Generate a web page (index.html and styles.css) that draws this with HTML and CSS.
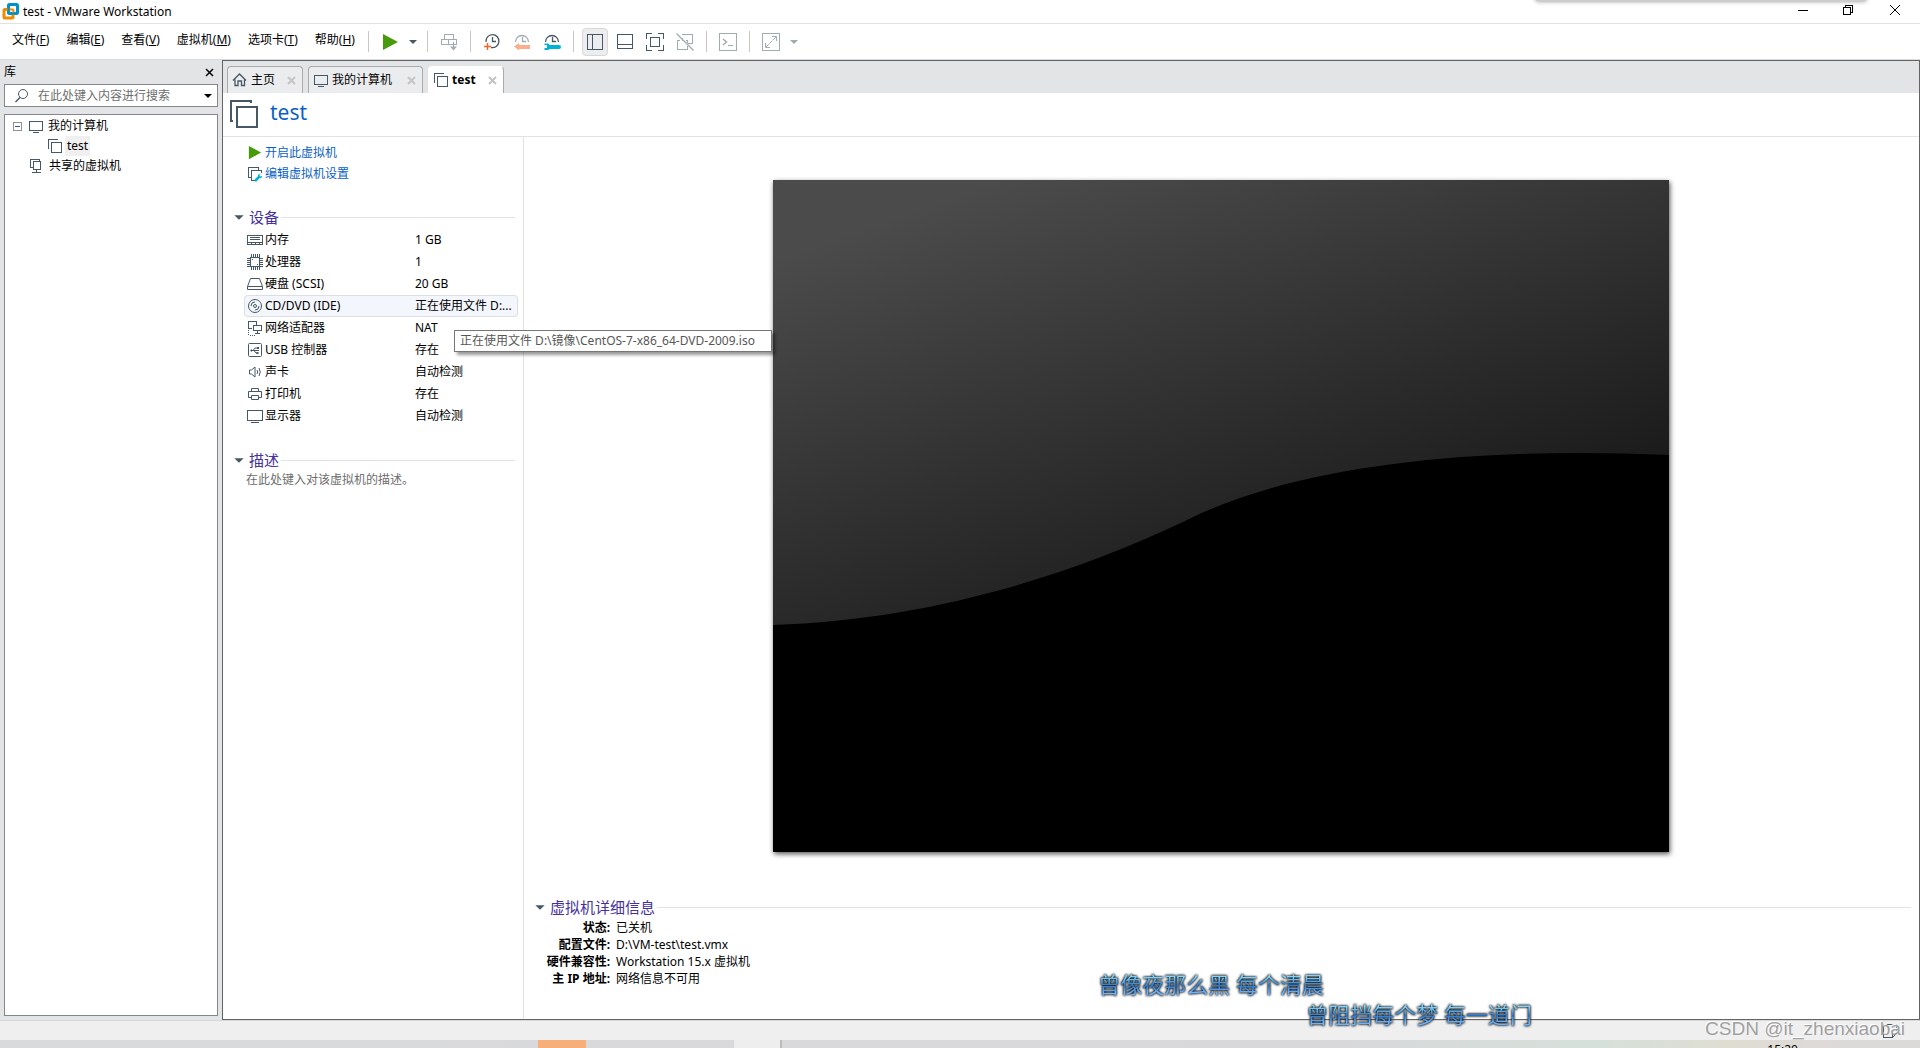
FILE: index.html
```html
<!DOCTYPE html>
<html lang="zh-CN">
<head>
    <meta charset="UTF-8">
    <title>test - VMware Workstation</title>
    <link rel="stylesheet" href="styles.css">
</head>
<body>
<!-- shared icons -->
<svg class="sprite">
    <symbol id="logo" viewBox="0 0 18 18"><g fill="none" stroke-width="3"><rect x="6.500" y="1.500" width="9" height="9" rx="1" stroke="#0091c8"/><path d="M6 6.500H3a1 1 0 0 0-1 1V14a1 1 0 0 0 1 1h7a1 1 0 0 0 1-1v-2" stroke="#f08a00"/><path d="M5 6.500h5.500a1 1 0 0 1 1 1V12" stroke="#f08a00" stroke-width="2"/><path d="M6.500 4v5.500a1 1 0 0 0 1 1H13" stroke="#0091c8" stroke-width="2"/></g></symbol>
    <symbol id="vm" viewBox="0 0 16 16"><path d="M1.500 10.500v-9h9M4.500 4.500h10v10h-10z" shape-rendering="crispEdges"/></symbol>
    <symbol id="vm-big" viewBox="0 0 28 28"><path d="M3 21H1V1h20v2M7 7h20v20H7z" stroke-width="2"/></symbol>
    <symbol id="monitor" viewBox="0 0 16 16"><path d="M1.500 3.500h13v9h-13zM5 14.500h6" shape-rendering="crispEdges"/></symbol>
    <symbol id="shared" viewBox="0 0 16 16"><path d="M3.500 9.500h-2v-8h9v2M4.500 3.500h7v8h-7zM7.500 12v2M3 14.500h9" shape-rendering="crispEdges"/></symbol>
    <symbol id="home" viewBox="0 0 16 16"><path d="M1 8.500 7.500 2 14 8.500M3 7.500v6h3V9h3.500v4.500h3v-6" stroke-width="1.300"/></symbol>
    <symbol id="play" viewBox="0 0 16 16"><path d="M1 0v15l14-7.500z" fill="#489a0d" stroke="none"/></symbol>
    <symbol id="down" viewBox="0 0 10 6"><path d="M1 1h8L5 5z" fill="currentColor" stroke="none"/></symbol>
    <symbol id="search" viewBox="0 0 16 16"><circle cx="9" cy="6" r="4.500"/><path d="M6 9.500 1.500 14" stroke-width="1.500"/></symbol>
    <symbol id="close" viewBox="0 0 9 9"><path d="M1 1l7 7M8 1 1 8"/></symbol>
</svg>

<header class="titlebar">
    <svg class="logo"><use href="#logo"/></svg>
    <h1>test - VMware Workstation</h1>
    <div class="winbtns">
        <button aria-label="最小化"><svg viewBox="0 0 10 10"><path d="M0 5.500h10" shape-rendering="crispEdges"/></svg></button>
        <button aria-label="还原"><svg viewBox="0 0 10 10"><path d="M.5 2.500h7v7h-7zM2.500 2V.5h7v7H8" shape-rendering="crispEdges"/></svg></button>
        <button aria-label="关闭"><svg viewBox="0 0 10 10"><path d="M0 0l10 10M10 0 0 10"/></svg></button>
    </div>
</header>

<div class="menubar">
    <nav class="menus">
        <button>文件(<u>F</u>)</button>
        <button>编辑(<u>E</u>)</button>
        <button>查看(<u>V</u>)</button>
        <button>虚拟机(<u>M</u>)</button>
        <button>选项卡(<u>T</u>)</button>
        <button>帮助(<u>H</u>)</button>
    </nav>
    <div class="tools">
        <i class="sep"></i>
        <button class="tool" aria-label="开启此虚拟机"><svg viewBox="0 0 18 18"><path d="M2 1v16l15-8z" fill="#489a0d" stroke="none"/></svg></button>
        <button class="caret" aria-label="电源选项"><svg><use href="#down"/></svg></button>
        <i class="sep"></i>
        <button class="tool off" aria-label="发送 Ctrl+Alt+Del"><svg viewBox="0 0 18 18"><path d="M4.500 1.500h9v5h-9zM1.500 6.500h7v5h-7zM8.500 6.500h8v5h-8zM13.500 9v6" shape-rendering="crispEdges"/><path d="M10 13.500h7l-3.500 4z" fill="currentColor" stroke="none"/></svg></button>
        <i class="sep"></i>
        <button class="tool" aria-label="拍摄快照"><svg viewBox="0 0 18 18"><path d="M3 9a6.500 6.500 0 1 1 5 5.500M9.500 4v4.500H13" stroke-width="1.300"/><path d="M4.500 10v7M1 13.500h7" stroke="#f0642c" stroke-width="1.500"/></svg></button>
        <button class="tool off" aria-label="恢复快照"><svg viewBox="0 0 18 18"><path d="M2.500 9a6.500 6.500 0 1 1 13 0M9.500 4v4.500H13" stroke-width="1.300"/><path d="M1 13.500 6 10v2h11v4H6v1.500z" fill="#fcae8c" stroke="none"/></svg></button>
        <button class="tool" aria-label="管理快照"><svg viewBox="0 0 18 18"><path d="M2.500 9a6.500 6.500 0 1 1 13 0M9.500 4v4.500H13" stroke-width="1.300"/><path d="M1.500 10.500H5l2 1.500h9a1.500 1.500 0 0 1 0 4H7l-2 1H1.500V15H4v-3H1.500z" fill="#00b2d8" stroke="none"/></svg></button>
        <i class="sep"></i>
        <button class="tool on" aria-label="显示库"><svg viewBox="0 0 18 18"><path d="M1.500 1.500h15v15h-15zM6.500 1.500v15" shape-rendering="crispEdges"/></svg></button>
        <button class="tool" aria-label="缩略图栏"><svg viewBox="0 0 18 18"><path d="M1.500 1.500h15v14h-15zM1.500 11.500h15" shape-rendering="crispEdges"/></svg></button>
        <button class="tool" aria-label="全屏"><svg viewBox="0 0 18 18"><path d="M.5 6V.5H6M12 .5h5.500V6M17.500 12v5.500H12M6 17.500H.5V12M4.500 4.500h9v9h-9z" shape-rendering="crispEdges"/></svg></button>
        <button class="tool off" aria-label="Unity"><svg viewBox="0 0 18 18"><path d="M6 1.500h10.500v9H12M4 7.500H1.500v9h10V13M10 7.500h1.500v2M6 5v2.500" shape-rendering="crispEdges"/><path d="M.5.5l17 17" stroke-width="1.300"/></svg></button>
        <i class="sep"></i>
        <button class="tool off" aria-label="控制台视图"><svg viewBox="0 0 18 18"><path d="M.5.5h17v17H.5zM9 12.500h5" shape-rendering="crispEdges"/><path d="M4 6l3.500 3L4 12" stroke-width="1.500"/></svg></button>
        <i class="sep"></i>
        <button class="tool off" aria-label="拉伸客户机"><svg viewBox="0 0 18 18"><path d="M.5.5h17v17H.5z" shape-rendering="crispEdges"/><path d="M4 14 14 4" stroke-dasharray="4 1"/><path d="M10 3.500h4.500V8M3.500 10v4.500H8"/></svg></button>
        <button class="caret off" aria-label="拉伸选项"><svg><use href="#down"/></svg></button>
    </div>
</div>

<div class="workspace">
    <aside class="library">
        <div class="library-head"><label for="search">库</label><button aria-label="关闭库"><svg><use href="#close"/></svg></button></div>
        <div class="search">
            <svg class="icon"><use href="#search"/></svg>
            <input id="search" type="text" placeholder="在此处键入内容进行搜索">
            <button aria-label="搜索选项"><svg class="arrow"><use href="#down"/></svg></button>
        </div>
        <ul class="tree">
            <li><button class="fold" aria-label="折叠"></button><svg class="icon"><use href="#monitor"/></svg><span>我的计算机</span></li>
            <li class="child"><svg class="icon"><use href="#vm"/></svg><span class="current">test</span></li>
            <li class="root"><svg class="icon"><use href="#shared"/></svg><span>共享的虚拟机</span></li>
        </ul>
    </aside>

    <main class="view">
        <div class="tabs">
            <div class="tab"><svg class="icon"><use href="#home"/></svg><a href="#">主页</a><button aria-label="关闭标签"><svg><use href="#close"/></svg></button></div>
            <div class="tab wide"><svg class="icon"><use href="#monitor"/></svg><a href="#">我的计算机</a><button aria-label="关闭标签"><svg><use href="#close"/></svg></button></div>
            <div class="tab active"><svg class="icon"><use href="#vm"/></svg><a href="#">test</a><button aria-label="关闭标签"><svg><use href="#close"/></svg></button></div>
        </div>
        <div class="vm-title"><svg><use href="#vm-big"/></svg><h2>test</h2></div>
        <div class="vm-body">
            <div class="summary">
                <div class="links">
                    <a href="#"><svg class="icon start"><use href="#play"/></svg>开启此虚拟机</a>
                    <a href="#"><svg class="icon" viewBox="0 0 16 16"><path d="M3.500 11.500h-2v-10h10v2M8 14.500H4.500v-10h10V7" shape-rendering="crispEdges"/><path d="M8 15l4-4" stroke="#00b2d8" stroke-width="2.500"/><path d="M11 8.500v3.500h3.500L15 10l-2 .5L12.500 9 14 8z" fill="#00b2d8" stroke="none"/></svg>编辑虚拟机设置</a>
                </div>
                <h3><svg class="arrow"><use href="#down"/></svg>设备</h3>
                <table class="devices">
                    <tr><td><svg class="icon" viewBox="0 0 16 16"><path d="M.5 3.500h15v9H.5zM3 5.500h10M3 7.500h10M1 10.500h14M4.500 11v1.500M8.500 11v1.500M12.500 11v1.500" shape-rendering="crispEdges"/></svg>内存</td><td>1 GB</td></tr>
                    <tr><td><svg class="icon" viewBox="0 0 16 16"><path d="M3.500 3.500h9v9h-9zM4.500 0v3M6.500 0v3M8.500 0v3M10.500 0v3M12.500 0v3M4.500 13v3M6.500 13v3M8.500 13v3M10.500 13v3M12.500 13v3M0 4.500h3M0 6.500h3M0 8.500h3M0 10.500h3M0 12.500h3M13 4.500h3M13 6.500h3M13 8.500h3M13 10.500h3M13 12.500h3M5 5.500h1M10 10.500h1" shape-rendering="crispEdges"/></svg>处理器</td><td>1</td></tr>
                    <tr><td><svg class="icon" viewBox="0 0 16 16"><path d="M3.500 2.500h9l3 8v3H.5v-3zM.5 10.500h15"/></svg>硬盘 (SCSI)</td><td>20 GB</td></tr>
                    <tr class="hover"><td><svg class="icon" viewBox="0 0 16 16"><circle cx="8" cy="8" r="6.500"/><circle cx="8" cy="8" r="1.500"/><path d="M4 8a4 4 0 0 1 4-4M12 8a4 4 0 0 1-4 4"/></svg>CD/DVD (IDE)</td><td>正在使用文件 D:...</td></tr>
                    <tr><td><svg class="icon" viewBox="0 0 16 16"><path d="M1.500 8.500v-7h8v3M1.500 8.500H5M6.500 5.500h8v5h-8zM10.500 11v2M8 13.500h5" shape-rendering="crispEdges"/><path d="M1.500 10v5H9" stroke-dasharray="1 1" shape-rendering="crispEdges"/></svg>网络适配器</td><td>NAT</td></tr>
                    <tr><td><svg class="icon" viewBox="0 0 16 16"><rect x="1.500" y="1.500" width="13" height="13" rx="1"/><path d="M4 8.500h8M6 8.500 8 6h2M7 8.500 9 11h1" /><path d="M3 8.500 5 7v3zM10 5h2v2h-2zM9.500 10h2v2h-2z" fill="currentColor" stroke="none"/></svg>USB 控制器</td><td>存在</td></tr>
                    <tr><td><svg class="icon" viewBox="0 0 16 16"><path d="M2.500 6v4h2L8 13V3L4.500 6zM10 6q1.500 2 0 4M12 4q2.500 4 0 8"/></svg>声卡</td><td>自动检测</td></tr>
                    <tr><td><svg class="icon" viewBox="0 0 16 16"><path d="M4.500 5.500v-3h7v3M4 11.500H1.500v-6h13v6H12M4.500 9.500h7v4h-7z"/></svg>打印机</td><td>存在</td></tr>
                    <tr><td><svg class="icon" viewBox="0 0 16 16"><path d="M.5 2.500h15v10H.5zM4 14.500h8" shape-rendering="crispEdges"/></svg>显示器</td><td>自动检测</td></tr>
                </table>
                <h3><svg class="arrow"><use href="#down"/></svg>描述</h3>
                <p class="note">在此处键入对该虚拟机的描述。</p>
            </div>
            <div class="console">
                <svg class="screen" viewBox="0 0 896 672">
                    <defs>
                        <linearGradient id="shade" gradientUnits="userSpaceOnUse" x1="25" y1="71" x2="187" y2="528">
                            <stop offset="0" stop-color="#4b4b4b"/>
                            <stop offset="1" stop-color="#1b1b1b"/>
                        </linearGradient>
                    </defs>
                    <path d="M0 0h896v672H0z" fill="url(#shade)" stroke="none"/>
                    <path d="M0 445C150 440 290 399 412 341C530 281 720 267 896 275V672H0z" fill="#000" stroke="none"/>
                </svg>
                <section class="details">
                    <h3><svg class="arrow"><use href="#down"/></svg>虚拟机详细信息</h3>
                    <dl>
                        <dt>状态:</dt><dd>已关机</dd>
                        <dt>配置文件:</dt><dd>D:\VM-test\test.vmx</dd>
                        <dt>硬件兼容性:</dt><dd>Workstation 15.x 虚拟机</dd>
                        <dt>主 IP 地址:</dt><dd>网络信息不可用</dd>
                    </dl>
                </section>
            </div>
        </div>
    </main>
</div>

<footer class="statusbar"><svg class="icon" viewBox="0 0 16 16"><path d="M1.500 1.500h13v9h-4v4h-9zM10.500 14.500l4-4" shape-rendering="crispEdges"/></svg></footer>
<div class="taskbar"><i class="task"></i><i class="task light"></i><time>15:20</time></div>

<!-- things floating above the window -->
<div class="top-shadow"></div>
<div class="tooltip">正在使用文件 D:\镜像\CentOS-7-x86_64-DVD-2009.iso</div>
<div class="lyric first">曾像夜那么黑 每个清晨</div>
<div class="lyric second">曾阻挡每个梦 每一道门</div>
<div class="watermark">CSDN @it_zhenxiaobai</div>
</body>
</html>
```
FILE: styles.css
```css
* { box-sizing: border-box; }
body {
    margin: 0;
    height: 100vh;
    display: flex;
    flex-direction: column;
    position: relative;
    overflow: hidden;
    background: #fff;
    color: #000;
    font: 12px/16px "Noto Sans", "Noto Sans CJK SC", sans-serif;
}
button {
    border: 0;
    padding: 0;
    background: none;
    font: inherit;
    color: inherit;
    display: flex;
    align-items: center;
    justify-content: center;
}
h1, h2, h3, p, ul, dl, dd { margin: 0; padding: 0; }
a { color: #0a5fc8; text-decoration: none; }
svg { fill: none; stroke: currentColor; flex: none; display: block; }
.sprite { position: absolute; width: 0; height: 0; }
.icon { width: 16px; height: 16px; color: #465866; }
.arrow { width: 12px; height: 7px; color: #465866; }

/* title bar */
.titlebar { display: flex; align-items: center; height: 24px; border-bottom: 1px solid #e2e2e2; }
.titlebar h1 { flex: 1; font-size: 12px; font-weight: 400; }
.logo { width: 18px; height: 18px; margin: 0 3px 0 2px; }
.winbtns { display: flex; padding-bottom: 3px; }
.winbtns button { width: 45px; }
.winbtns button:last-child { width: 50px; }
.winbtns svg { width: 10px; height: 10px; }

/* menu and toolbar */
.menubar { display: flex; height: 36px; border-bottom: 1px solid #dcdcdc; }
.menus { display: flex; gap: 17px; padding: 0 7px 4px 12px; }
.menus u { text-underline-offset: 1px; }
.tools { display: flex; align-items: center; color: #465866; }
.sep { width: 1px; height: 21px; margin: 0 6px; background: #c8c8c8; }
.tool { width: 30px; height: 28px; }
.tool svg { width: 18px; height: 18px; }
.on { width: 26px; margin: 0 2px; background: #ecedee; border: 1px solid #d8d8d8; border-radius: 4px; }
.off { color: #a3abb2; }
.caret { width: 16px; }
.caret svg { width: 10px; height: 6px; }

/* library */
.workspace { flex: 1; min-height: 0; display: flex; background: #e3e4e6; }
.library { width: 222px; padding: 0 4px 4px; display: flex; flex-direction: column; }
.library-head { display: flex; justify-content: space-between; align-items: center; height: 24px; padding-right: 4px; }
.library-head svg { width: 9px; height: 9px; stroke-width: 1.5; }
.search { display: flex; align-items: center; height: 23px; border: 1px solid #82878f; background: #fff; padding: 0 4px 0 9px; }
.search input { flex: 1; min-width: 0; border: 0; outline: 0; padding: 0 0 0 8px; font: inherit; background: none; }
.search input::placeholder { color: #6d6d6d; opacity: 1; }
.search .arrow { width: 10px; height: 6px; color: #000; }
.tree { flex: 1; margin-top: 7px; padding-top: 1px; border: 1px solid #82878f; background: #fff; list-style: none; }
.tree li { display: flex; align-items: center; height: 20px; padding-left: 8px; }
.tree li.child { padding-left: 42px; }
.tree li.root { padding-left: 24px; }
.tree span { padding: 2px 4px; }
.tree .current { background: #f0f0f0; padding: 2px; margin-left: 2px; }
.fold { width: 9px; height: 9px; margin-right: 6px; border: 1px solid #919191; }
.fold::before { content: ""; width: 5px; height: 1px; background: #3c50a0; }

/* tabs and title */
.view { flex: 1; min-width: 0; display: flex; flex-direction: column; border: 1px solid #646464; background: #fff; }
.tabs { display: flex; gap: 5px; height: 32px; padding: 5px 4px 0; background: #e3e4e6; }
.tab { display: flex; align-items: center; padding: 0 6px 0 4px; background: #ebecee; border: 1px solid #a9abad; border-bottom: 0; border-radius: 4px 4px 0 0; }
.tab a { color: #000; margin: 0 12px 0 3px; }
.tab.wide a { margin-right: 15px; }
.tab button { color: #c4c4c4; }
.tab button svg { width: 9px; height: 9px; stroke-width: 2; }
.tab.active { background: #fff; border-color: #fff #a9abad #fff #fff; font-weight: 700; }
.vm-title { display: flex; align-items: center; height: 44px; padding: 0 7px 2px; gap: 12px; border-bottom: 1px solid #e2e2e2; color: #465866; }
.vm-title svg { width: 28px; height: 28px; }
.vm-title h2 { font-size: 21px; line-height: 28px; font-weight: 400; color: #0a5fc8; padding-bottom: 3px; }

/* left column */
.vm-body { flex: 1; min-height: 0; display: flex; }
.summary { width: 301px; padding: 5px 5px 0 10px; border-right: 1px solid #e2e2e2; }
.links { padding: 0 0 21px 14px; }
.links a { display: flex; align-items: center; height: 21px; }
.links .icon { margin-right: 2px; }
.links .start { padding: 1px; }
h3 { display: flex; align-items: center; height: 24px; font-size: 15px; line-height: 24px; font-weight: 400; color: #46329b; }
h3 .arrow { margin-right: 4px; }
h3::after { content: ""; flex: 1; height: 1px; margin: 0 3px 0 2px; background: #e2e2e2; }
.devices { width: 274px; margin: 0 0 21px 11px; border-collapse: separate; border-spacing: 0; }
.devices td { height: 22px; padding: 0; border: 1px solid transparent; border-width: 1px 0; vertical-align: middle; white-space: nowrap; }
.devices td:first-child { width: 171px; padding-left: 3px; }
.devices .icon { display: inline-block; vertical-align: middle; margin: -2px 2px 0 0; }
.hover td { background: #f3f7fd; border-color: #dcdee2; }
.hover td:first-child { border-left: 1px solid #dcdee2; border-radius: 4px 0 0 4px; padding-left: 2px; }
.hover td:last-child { border-right: 1px solid #dcdee2; border-radius: 0 4px 4px 0; }
.note { padding-left: 13px; color: #6d6d6d; }

/* console preview */
.console { flex: 1; min-width: 0; display: flex; flex-direction: column; justify-content: space-between; padding: 43px 1px 32px 0; }
.screen { width: 65%; max-width: 896px; height: auto; margin: 0 auto; box-shadow: 1px 2px 5px #555; }
.details { padding: 0 4px 0 10px; }
.details dl { display: grid; grid-template-columns: 76px 1fr; column-gap: 6px; line-height: 17px; }
.details dt { font-weight: 700; text-align: right; white-space: nowrap; }

/* bottom */
.statusbar { display: flex; justify-content: flex-end; align-items: center; height: 20px; padding-right: 22px; background: #efefef; border-top: 1px solid #d8d8d8; }
.taskbar { display: flex; height: 8px; overflow: hidden; padding-left: 28%; background: linear-gradient(90deg, #d9dadb 0%, #d8d8da 70%, #d5e0da 83%, #dfddd2 90%, #dcd9d9 96%); }
.task { width: 48px; background: #f8ae78; }
.task.light { margin-left: 148px; background: #eee; border-right: 2px solid #bbb; }
.taskbar time { margin: 3px 122px 0 auto; line-height: 14px; }

/* overlays */
.top-shadow { position: absolute; top: -6px; right: 54px; width: 330px; height: 7px; background: #ccc; box-shadow: 0 0 5px #888; }
.tooltip { position: absolute; left: 454px; top: 330px; min-width: 318px; padding: 2px 5px; height: 22px; border: 1px solid #767676; background: #fff; color: #575757; box-shadow: 3px 3px 3px rgba(0, 0, 0, .4); white-space: nowrap; }
.lyric {
    position: absolute;
    font-size: 22px;
    line-height: 28px;
    white-space: nowrap;
    background: linear-gradient(#7cd4ff 25%, #2c78cc 55%, #68b4ff 80%);
    -webkit-background-clip: text;
    background-clip: text;
    color: transparent;
    filter: drop-shadow(0 0 1px #000) drop-shadow(0 0 1px #444);
}
.first { right: 596px; bottom: 50px; }
.second { right: 388px; bottom: 20px; }
.watermark { position: absolute; right: 15px; bottom: 7px; font: 19px/24px "Liberation Sans", Arial, sans-serif; color: #a0a0a0; text-shadow: -1px -1px #fff; }
```
